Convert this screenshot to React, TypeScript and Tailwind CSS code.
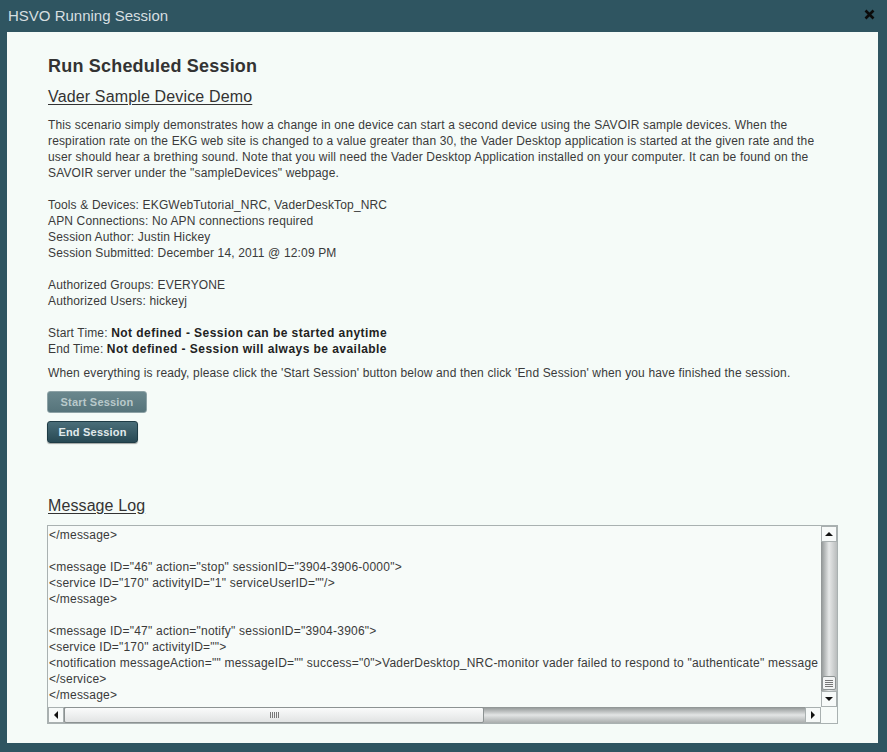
import React from "react";

const logLines = [
  "</message>",
  "",
  '<message ID="46" action="stop" sessionID="3904-3906-0000">',
  '<service ID="170" activityID="1" serviceUserID=""/>',
  "</message>",
  "",
  '<message ID="47" action="notify" sessionID="3904-3906">',
  '<service ID="170" activityID="">',
  '<notification messageAction="" messageID="" success="0">VaderDesktop_NRC-monitor vader failed to respond to "authenticate" message',
  "</service>",
  "</message>",
];

const descLines = [
  "This scenario simply demonstrates how a change in one device can start a second device using the SAVOIR sample devices. When the",
  "respiration rate on the EKG web site is changed to a value greater than 30, the Vader Desktop application is started at the given rate and the",
  "user should hear a brething sound. Note that you will need the Vader Desktop Application installed on your computer. It can be found on the",
  'SAVOIR server under the "sampleDevices" webpage.',
];

function Tri({ dir }: { dir: "up" | "down" | "left" | "right" }) {
  const pts = {
    up: "0,5 8,5 4,1",
    down: "0,1 8,1 4,5",
    left: "5,0 5,8 1,4",
    right: "1,0 1,8 5,4",
  }[dir];
  const w = dir === "up" || dir === "down" ? 8 : 6;
  const h = dir === "up" || dir === "down" ? 6 : 8;
  return (
    <svg width={w} height={h} viewBox={`0 0 ${w} ${h}`}>
      <polygon points={pts} fill="#111" />
    </svg>
  );
}

function ScrollButton({ dir }: { dir: "up" | "down" | "left" | "right" }) {
  return (
    <div className="flex h-[16px] w-[16px] shrink-0 items-center justify-center border border-[#a9b0b0] bg-[#f7faf9]">
      <Tri dir={dir} />
    </div>
  );
}

export default function App() {
  return (
    <div
      className="flex h-[752px] w-[887px] flex-col bg-[#2f5561] text-[#3a3a3a]"
      style={{ fontFamily: '"Liberation Sans", Arial, sans-serif' }}
    >
      {/* Title bar */}
      <div className="flex h-[32px] shrink-0 items-center justify-between pl-[8px] pr-[12px]">
        <span className="text-[15px] text-[#d6dfe0]">HSVO Running Session</span>
        <svg width="11" height="11" viewBox="0 0 11 11" className="mb-[4px]">
          <path d="M1.5 1.5 L9.5 9.5 M9.5 1.5 L1.5 9.5" stroke="#0b0b0b" strokeWidth="2.6" />
        </svg>
      </div>

      {/* Panel */}
      <div className="mb-[9px] ml-[7px] mr-[9px] flex-1 bg-[#f5fbf8] pl-[41px] pt-[23px]">
        <h1 className="text-[18px] font-bold leading-[22px] tracking-[0.2px] text-[#333]">Run Scheduled Session</h1>
        <h2 className="mt-[10px] text-[16px] leading-[20px] tracking-[0.15px] text-[#333] underline underline-offset-2">
          Vader Sample Device Demo
        </h2>

        <div className="mt-[10px] text-[12px] leading-[16px] tracking-[0.15px]">
          <p className="whitespace-nowrap">
            {descLines.map((l, i) => (
              <span key={i} className="block">
                {l}
              </span>
            ))}
          </p>

          <div className="mt-[16px]">
            <div>Tools &amp; Devices: EKGWebTutorial_NRC, VaderDeskTop_NRC</div>
            <div>APN Connections: No APN connections required</div>
            <div>Session Author: Justin Hickey</div>
            <div>Session Submitted: December 14, 2011 @ 12:09 PM</div>
          </div>

          <div className="mt-[16px]">
            <div>Authorized Groups: EVERYONE</div>
            <div>Authorized Users: hickeyj</div>
          </div>

          <div className="mt-[16px]">
            <div>
              Start Time:{" "}
              <b className="tracking-[0.45px] text-[#222]">Not defined - Session can be started anytime</b>
            </div>
            <div>
              End Time:{" "}
              <b className="tracking-[0.45px] text-[#222]">Not defined - Session will always be available</b>
            </div>
          </div>

          <div className="mt-[8px] whitespace-nowrap">
            When everything is ready, please click the 'Start Session' button below and then click 'End Session' when you have finished the session.
          </div>
        </div>

        <div className="-ml-[1px] mt-[10px] flex flex-col items-start gap-[8px]">
          <button
            disabled
            className="h-[22px] w-[100px] rounded-[3px] border border-[#8da2a6] bg-gradient-to-b from-[#6a878d] to-[#56747b] text-[11px] font-bold tracking-[0.2px] text-[#b9c9cb]"
          >
            Start Session
          </button>
          <button className="h-[22px] w-[91px] rounded-[3px] border border-[#1f3c46] bg-gradient-to-b from-[#4a6e79] to-[#284954] text-[11px] font-bold tracking-[0.2px] text-[#e1eaec] shadow-[0_1px_1px_rgba(0,0,0,0.35)]">
            End Session
          </button>
        </div>

        <h2 className="mt-[53px] text-[16px] leading-[20px] tracking-[0.1px] text-[#333] underline underline-offset-2">
          Message Log
        </h2>

        {/* Log box */}
        <div className="-ml-[1px] mt-[9px] flex h-[199px] w-[791px] flex-col border border-[#a9b1b1] bg-[#f7fbf9]">
          <div className="flex min-h-0 flex-1">
            <div className="min-w-0 flex-1 overflow-hidden whitespace-pre pl-[1px] pt-[1px] text-[12px] leading-[16px] tracking-[0.22px] text-[#3a3a3a]">
              {logLines.map((l, i) => (
                <div key={i} className="h-[16px]">
                  {l}
                </div>
              ))}
            </div>
            {/* vertical scrollbar */}
            <div className="flex w-[16px] flex-col">
              <ScrollButton dir="up" />
              <div className="flex flex-1 flex-col justify-end bg-gradient-to-r from-[#8e9393] via-[#e6e8e8] to-[#b9bdbd]">
                <div className="mx-[1px] mb-[1px] flex h-[14px] flex-col items-center justify-center gap-[1px] rounded-[2px] border border-[#8c9292] bg-[#f2f4f4]">
                  <div className="h-px w-[8px] bg-[#777]" />
                  <div className="h-px w-[8px] bg-[#777]" />
                  <div className="h-px w-[8px] bg-[#777]" />
                  <div className="h-px w-[8px] bg-[#777]" />
                </div>
              </div>
              <ScrollButton dir="down" />
            </div>
          </div>
          {/* horizontal scrollbar */}
          <div className="flex h-[16px] shrink-0">
            <ScrollButton dir="left" />
            <div className="flex flex-1 bg-gradient-to-b from-[#8e9393] via-[#e3e5e5] to-[#a9adad]">
              <div className="flex w-[420px] items-center justify-center rounded-[2px] border border-[#8c9292] bg-gradient-to-b from-[#fafbfb] to-[#e2e4e4]">
                <div className="flex h-[6px] gap-[1px]">
                  <div className="w-px bg-[#777]" />
                  <div className="w-px bg-[#777]" />
                  <div className="w-px bg-[#777]" />
                  <div className="w-px bg-[#777]" />
                  <div className="w-px bg-[#777]" />
                </div>
              </div>
            </div>
            <ScrollButton dir="right" />
            <div className="w-[16px] bg-[#f7fbf9]" />
          </div>
        </div>
      </div>
    </div>
  );
}
